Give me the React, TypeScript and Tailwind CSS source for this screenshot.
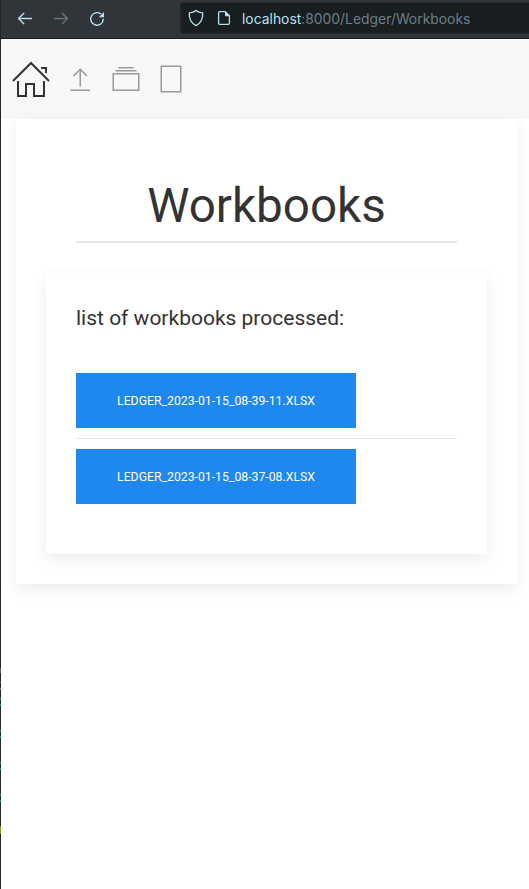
const workbooks = ["LEDGER_2023-01-15_08-39-11.XLSX", "LEDGER_2023-01-15_08-37-08.XLSX"];

function BrowserBar() {
  return (
    <div className="flex h-[39px] items-start border-b border-[#1b1d22] bg-[#30353a] text-[#b3e1f2]">
      <div className="flex h-[38px] w-[179px] shrink-0 items-center gap-5 pl-4">
        <svg width="16" height="16" viewBox="0 0 16 16" fill="none" stroke="currentColor" strokeWidth="1.4" strokeLinecap="round" strokeLinejoin="round"><path d="M14.5 7.5H1.500M6.800 2.200L1.500 7.500l5.300 5.300" /></svg>
        <svg className="text-[#64747c]" width="16" height="16" viewBox="0 0 16 16" fill="none" stroke="currentColor" strokeWidth="1.4" strokeLinecap="round" strokeLinejoin="round"><path d="M1.500 7.500h13M9.200 2.200L14.500 7.500l-5.300 5.300" /></svg>
        <svg width="16" height="16" viewBox="0 0 16 16" fill="none" stroke="currentColor" strokeWidth="1.4" strokeLinecap="round"><path d="M14.300 8.200A6.300 6.300 0 1 1 11.700 2.800" /><path d="M15 1v5.200H9.800z" fill="currentColor" stroke="none" /></svg>
      </div>
      <div className="mt-[2px] flex h-8 flex-1 items-center rounded-l border border-r-0 border-[#23282c] bg-[#191e21] pl-[7px]">
        <svg width="16" height="18" viewBox="0 0 16 18" fill="none" stroke="currentColor" strokeWidth="1.3" strokeLinejoin="round"><path d="M8 1.4C6.5 2.8 4 3.6 1.3 3.9 1 9.5 3 14.2 8 16.6c5-2.4 7-7.1 6.7-12.7C12 3.6 9.500 2.800 8 1.400z" /></svg>
        <svg className="ml-3" width="16" height="16" viewBox="0 0 16 16" fill="none" stroke="currentColor" strokeWidth="1.3" strokeLinejoin="round"><path d="M9.300 1.700H3.600a1 1 0 0 0-1 1v10.600a1 1 0 0 0 1 1h8.800a1 1 0 0 0 1-1V5.800z" /><path d="M9 1.300v5h5z" fill="currentColor" stroke="none" /></svg>
        <div className="ml-[10px] whitespace-nowrap pt-[2px] font-['Inter',sans-serif] text-[13.88px] leading-5 text-[#6a7f89]"><span className="text-[#b3e1f2]">localhost</span>:8000/Ledger/Workbooks</div>
      </div>
    </div>
  );
}

function NavBar() {
  return (
    <nav className="flex h-20 items-center gap-[15px] bg-[#f8f8f8] pl-[10px] text-[#999]">
      <svg className="text-[#333]" width="40" height="40" viewBox="0 0 20 20" fill="currentColor"><polygon points="18.65 11.35 10 2.71 1.35 11.35 .65 10.65 10 1.29 19.35 10.65" /><polygon points="15 4 18 4 18 7 17 7 17 5 15 5" /><polygon points="3 11 4 11 4 18 7 18 7 12 12 12 12 18 16 18 16 11 17 11 17 19 11 19 11 13 8 13 8 19 3 19" /></svg>
      <svg width="30" height="30" viewBox="0 0 20 20" fill="currentColor"><polyline fill="none" stroke="currentColor" points="5 8 9.5 3.5 14 8" /><rect x="3" y="17" width="13" height="1" /><line stroke="currentColor" x1="9.5" y1="15" x2="9.5" y2="4" /></svg>
      <svg width="30" height="30" viewBox="0 0 20 20" fill="currentColor"><rect x="5" y="2" width="10" height="1" /><rect x="3" y="4" width="14" height="1" /><rect fill="none" stroke="currentColor" x="1.5" y="6.5" width="17" height="11" /></svg>
      <svg width="30" height="30" viewBox="0 0 20 20" fill="none" stroke="currentColor"><rect x="3.5" y="1.5" width="13" height="17" /></svg>
    </nav>
  );
}

function WindowEdge() {
  return (
    <div className="flex w-px shrink-0 flex-col bg-[#23272d]">
      <div className="mt-[668px] h-[5px] bg-[#62666b]" />
      <div className="mt-[9px] h-px bg-[#777b80]" />
      <div className="mt-[5px] h-[2px] bg-[#777b80]" />
      {[0, 1, 2, 3].map((n) => (
        <div key={n} className="h-8 pt-2">
          <div className="h-[2px] bg-[#128c62]" />
          <div className="mt-1 h-[2px] bg-[#128c62]" />
        </div>
      ))}
      <div className="mt-2 h-2 bg-[#8f962e]" />
    </div>
  );
}

export default function App() {
  return (
    <div className="flex h-[889px] overflow-hidden bg-white font-['Roboto',sans-serif] text-[#333]">
      <WindowEdge />
      <div className="min-w-0 flex-1">
        <BrowserBar />
        <NavBar />
        <main className="relative ml-[15px] mr-3 h-[465px] bg-white px-[30px] pt-[57px] shadow-[0_5px_15px_rgba(0,0,0,0.08)]">
          <h1 className="mx-[30px] h-[67px] border-b-2 border-[#e5e5e5] text-center text-[47.6px] leading-[60px]">Workbooks</h1>
          <section className="mt-[30px] h-[281px] bg-white p-[30px] shadow-[0_5px_15px_rgba(0,0,0,0.08)]">
            <h2 className="h-[70px] text-[21px] leading-[30px]">list of workbooks processed:</h2>
            <ul>
              {workbooks.map((name) => (
                <li key={name} className="border-[#e5e5e5] not-first:mt-[10px] not-first:border-t not-first:pt-[10px]">
                  <button className="block h-[55px] w-[280px] bg-[#1e87f0] pt-px text-[12.25px] leading-[54px] text-white">{name}</button>
                </li>
              ))}
            </ul>
          </section>
        </main>
      </div>
    </div>
  );
}
